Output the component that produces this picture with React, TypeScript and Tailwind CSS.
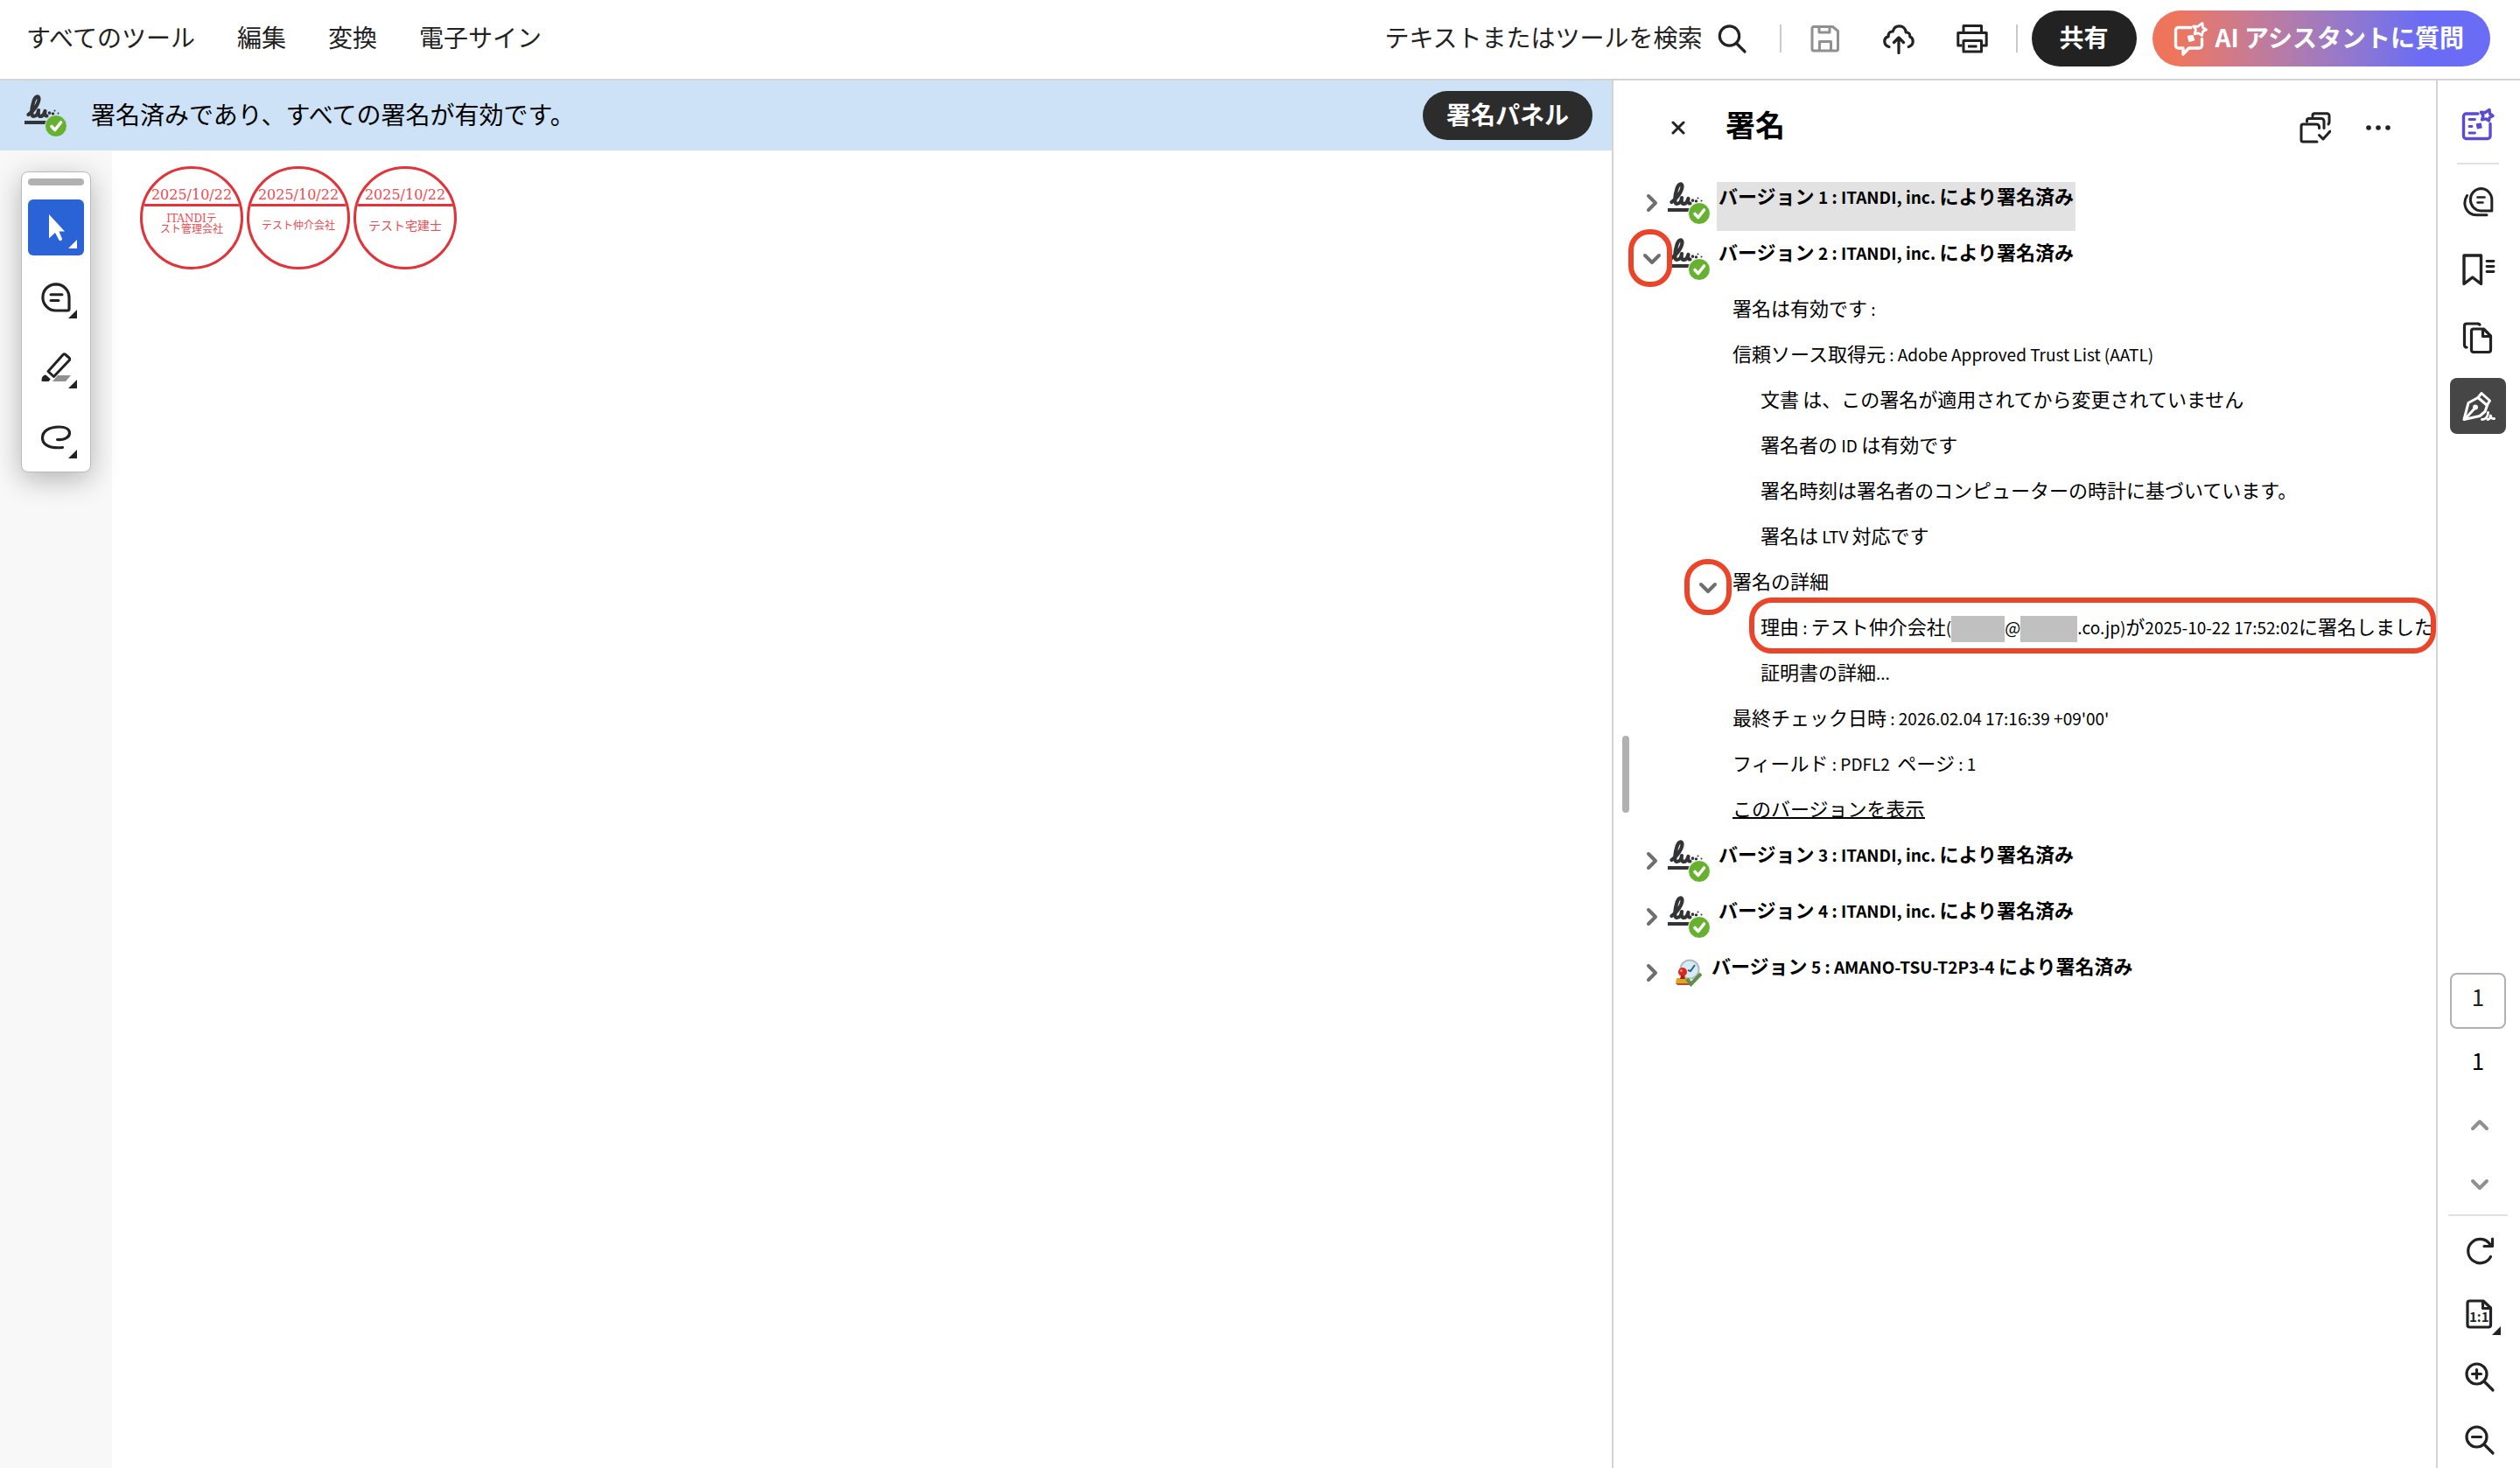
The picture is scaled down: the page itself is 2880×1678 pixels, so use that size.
import React from "react";

type IconProps = { className?: string };

function SearchIcon({ className }: IconProps) {
  return (
    <svg viewBox="0 0 36 36" fill="none" stroke="currentColor" strokeWidth="3.2" strokeLinecap="round" className={className}>
      <circle cx="14.5" cy="15" r="11.2" />
      <path d="M22.5 23.5 32 33" />
    </svg>
  );
}

function SaveIcon() {
  return (
    <svg viewBox="0 0 36 36" fill="none" stroke="currentColor" strokeWidth="3" strokeLinejoin="round" className="size-9">
      <path d="M5 4.5h21.5l6 5V30a2 2 0 0 1-2 2H5a2 2 0 0 1-2-2V6.5a2 2 0 0 1 2-2Z" />
      <path d="M11 5v6h12V5M11.5 32V21.5h13V32" />
    </svg>
  );
}

function CloudUploadIcon() {
  return (
    <svg viewBox="0 0 36 36" fill="none" stroke="currentColor" strokeWidth="3.2" strokeLinecap="round" strokeLinejoin="round" className="size-9">
      <path d="M7 27.5C3.5 26.5 1.8 24 1.8 21.2c0-3 2-5 4.4-5.4-.6-3.5 1.6-6 5-5.800C12.2 6 15 3.8 18.6 3.8c4.4 0 7.4 3 7.6 7.2 3.2-.2 5 2 4.6 5 2.2.8 3.4 2.8 3.4 5.2 0 3-1.8 5.3-5 6.3" />
      <path d="M18 34.5V18M12.5 22.5 18 17l5.5 5.5" />
    </svg>
  );
}

function PrintIcon() {
  return (
    <svg viewBox="0 0 36 36" fill="none" stroke="currentColor" strokeWidth="3" strokeLinejoin="round" className="size-9">
      <path d="M8 11V3.5h20.5V11" />
      <path d="M6.5 26H1.8V11.5h32.4V26h-4.7" />
      <path d="M8 20.5h20.5V33H8ZM13 27h10.5" />
    </svg>
  );
}

function AssistantIcon() {
  return (
    <svg viewBox="0 0 40 40" fill="none" stroke="currentColor" strokeWidth="3.4" strokeLinejoin="round" strokeLinecap="round" className="size-10">
      <path d="M20 7.5H5.5a3 3 0 0 0-3 3v17.5a3 3 0 0 0 3 3h5.5v7l6.5-7h12a3 3 0 0 0 3-3v-7.5" />
      <path d="M33 2.5 33.5 7.500 37.500 10 33.500 12 32.500 16.500l-4-2.700-4.500 1 1.500-4.800-2.800-4.200 5 .5Z" strokeWidth="2.8" />
      <path d="m16.5 17.5 5.5-.8 1.5 5-5.5 1.5Z" fill="currentColor" strokeWidth="1.5" />
    </svg>
  );
}

function GenerateIcon() {
  return (
    <svg viewBox="0 0 40 40" fill="none" stroke="currentColor" strokeWidth="3.4" strokeLinejoin="round" strokeLinecap="round" className="size-10">
      <path d="M20 8H6.5a3 3 0 0 0-3 3v22.5a3 3 0 0 0 3 3H31a3 3 0 0 0 3-3V19.500" />
      <path d="M10 14.5h6.5M10 22.5h3M10 30h6.5" strokeWidth="2.8" />
      <path d="m18.5 20 4.5-.8 1 4.5-4.5 1Z" fill="currentColor" strokeWidth="1.5" />
      <path d="M33 3.5 33.5 8 37 10.5l-3.7 1.700L32.500 16l-3.500-2.200-4.500 1 1.500-4.500-2.500-4 4.500.4Z" strokeWidth="3.4" />
    </svg>
  );
}

function PanelCheckIcon() {
  return (
    <svg viewBox="0 0 36 36" fill="none" stroke="currentColor" strokeWidth="3" strokeLinejoin="round" strokeLinecap="round" className="size-9">
      <path d="M20 34H4a2 2 0 0 1-2-2V16a2 2 0 0 1 2-2h15.5a3 3 0 0 1 3 3v1.5" />
      <path d="M8.5 11v-1.5a2 2 0 0 1 2-2H25a3 3 0 0 1 3 3v8" />
      <path d="M15 5V3.8a2 2 0 0 1 2-2h14.5a2.5 2.5 0 0 1 2.5 2.500V12l-1 2" />
      <path d="m22.5 26.5 4.5 4.5 8-9" />
    </svg>
  );
}

function CommentIcon() {
  return (
    <svg viewBox="0 0 36 36" fill="none" stroke="currentColor" strokeWidth="3.2" strokeLinejoin="round" strokeLinecap="round" className="size-9">
      <path d="M18 2.8a15.2 15.2 0 0 1 15 15.2v13a2 2 0 0 1-2 2H18A15 15 0 0 1 18 2.800Z" />
      <path d="M12 14.8h13M12 21.5h9" strokeWidth="3" />
    </svg>
  );
}

function HighlightIcon() {
  return (
    <svg viewBox="0 0 36 36" fill="none" stroke="currentColor" strokeWidth="3" strokeLinejoin="round" strokeLinecap="round" className="size-9">
      <path d="M20 27h15l-6 7H14Z" fill="#919191" stroke="none" />
      <path d="M26 3.5a2 2 0 0 1 3 0l4 3.500a2 2 0 0 1 0 3L15.500 28.500 9 22.500Z" />
      <path d="M6 27.5 10.5 31.5 9 33H2.500c0-3 1-5 3.500-5.500Z" fill="currentColor" strokeWidth="2" />
    </svg>
  );
}

function DrawIcon() {
  return (
    <svg viewBox="0 0 36 36" fill="none" stroke="currentColor" strokeWidth="3.2" strokeLinecap="round" className="size-9">
      <path d="M19.5 20.5c8 .5 14-2.500 14-7.500 0-4.500-5-7-12-7C10 6 2.500 11 2.500 18.500 2.500 26 10 31 25.500 29.500" />
    </svg>
  );
}

function CommentsIcon() {
  return (
    <svg viewBox="0 0 36 36" fill="none" stroke="currentColor" strokeWidth="3" strokeLinejoin="round" strokeLinecap="round" className="size-9">
      <path d="M21 3.5a12.8 12.8 0 0 1 12.8 12.800V29H21A12.800 12.800 0 0 1 21 3.500Z" />
      <path d="M17.5 13.5h8M17.5 19.5h6" strokeWidth="2.6" />
      <path d="M5.500 11.500C-.5 21 4.500 33.700 16 33.700h12" />
    </svg>
  );
}

function BookmarkIcon() {
  return (
    <svg viewBox="0 0 40 40" fill="none" stroke="currentColor" strokeWidth="3.4" strokeLinejoin="round" strokeLinecap="round" className="size-10">
      <path d="M4 4h19.5v32.5L13.700 29 4 36.500Z" />
      <path d="M30 10.5h8M30 16.5h8M30 22.5h8" strokeWidth="2.8" />
    </svg>
  );
}

function PagesIcon() {
  return (
    <svg viewBox="0 0 36 40" fill="none" stroke="currentColor" strokeWidth="3.2" strokeLinejoin="round" strokeLinecap="round" className="h-10 w-9">
      <path d="M13 10h11.5l8 8v16a2.500 2.500 0 0 1-2.500 2.500H13a2.500 2.500 0 0 1-2.500-2.500V12.500A2.500 2.500 0 0 1 13 10Z" />
      <path d="M23.5 10.5V18.5h8" />
      <path d="M5 31a2.500 2.500 0 0 1-2.500-2.500v-22A2.500 2.500 0 0 1 5 4h13l2 1" />
    </svg>
  );
}

function SignIcon() {
  return (
    <svg viewBox="0 0 40 40" fill="none" stroke="currentColor" strokeWidth="3" strokeLinejoin="round" strokeLinecap="round" className="size-10">
      <path d="M4 35.500 9 16.500 20 10.500l4-5 9.500 8.500-2.500 4-3 8.500L22 31.500Z" />
      <path d="m20 10.500 10 8.500M5 35l11-12" />
      <circle cx="17" cy="21.5" r="1.5" />
      <path d="M24.500 35.500c4 0 7-3 7-8M31 35.500c2 0 3-2 3.500-4.500.3 2.500 1 4 4 3.500" strokeWidth="2.8" />
    </svg>
  );
}

function RotateIcon() {
  return (
    <svg viewBox="0 0 36 36" fill="none" stroke="currentColor" strokeWidth="3.2" strokeLinecap="round" strokeLinejoin="round" className="size-9">
      <path d="M30.5 24.5A13.700 13.700 0 1 1 29.500 10" />
      <path d="M32.5 4v8.5H23" />
    </svg>
  );
}

function ActualSizeIcon() {
  return (
    <svg viewBox="0 0 36 36" fill="none" stroke="currentColor" strokeWidth="3.2" strokeLinejoin="round" className="size-9">
      <path d="M6.5 3H22l8.500 8v19.500a2.500 2.500 0 0 1-2.500 2.500H6.500A2.500 2.500 0 0 1 4 30.500v-25A2.500 2.500 0 0 1 6.500 3Z" />
      <path d="M21.5 3.500V11.500h8.500" />
      <text x="17.3" y="26.5" textAnchor="middle" fontSize="15" fontWeight="700" fill="currentColor" stroke="none">
        1:1
      </text>
    </svg>
  );
}

function ZoomIcon({ plus = false }: { plus?: boolean }) {
  return (
    <svg viewBox="0 0 36 36" fill="none" stroke="currentColor" strokeWidth="3.2" strokeLinecap="round" className="size-9">
      <circle cx="14.5" cy="14.5" r="11.5" />
      <path d="M23.5 23.5 33 33M9.5 14.5h10" />
      {plus && <path d="M14.5 9.5v10" />}
    </svg>
  );
}

function Chevron({ className }: IconProps) {
  return (
    <svg viewBox="0 0 24 24" fill="none" stroke="currentColor" strokeWidth="4" strokeLinecap="round" strokeLinejoin="round" className={className}>
      <path d="m8 4 8 8-8 8" />
    </svg>
  );
}

function SignedIcon({ ring = "#fff" }: { ring?: string }) {
  return (
    <svg viewBox="0 0 48 48" fill="none" strokeLinecap="round" strokeLinejoin="round" className="size-12 shrink-0">
      <g stroke="#333436" strokeWidth="4.2">
        <path d="M4.500 23C10 19.500 16.500 10.500 16.500 5 16.500 1 12.500 1.500 10.500 7.500 8.500 14 6.500 25 10.500 25c3 0 5-3.500 5.500-7-.8 4 0 7 2.500 7s4-3 5-6c-.8 3.500 0 5.500 2 5.500" />
        <path d="M28.500 21v.3M32.500 22v.1" strokeWidth="3.5" />
        <path d="M34.500 18.500v.1M38.500 21.500v.1" strokeWidth="2" />
        <path d="M0 32h26" strokeWidth="4" strokeLinecap="butt" />
      </g>
      <circle cx="36" cy="36" r="12.5" fill="#67b131" stroke={ring} strokeWidth="1" />
      <path d="m31 36.5 3.8 4L41.500 32" stroke="#fff" strokeWidth="3.6" />
    </svg>
  );
}

function TimestampIcon() {
  return (
    <svg viewBox="0 0 32 32" fill="none" className="mt-2 size-8 shrink-0">
      <circle cx="17" cy="12" r="10.5" fill="#d5ecf8" stroke="#b5b9be" strokeWidth="2" />
      <path d="m15 13 3 1 5-7" stroke="#365f7d" strokeWidth="2" />
      <path d="M2 22h14l3 7H1Z" fill="#d9a826" />
      <path d="M2 28h16v2H3Z" fill="#c8442a" />
      <ellipse cx="9" cy="15" rx="5" ry="5" fill="#d9281c" />
      <path d="M7 19h4l1 4H6Z" fill="#b01c14" />
      <circle cx="7.5" cy="13.5" r="1.5" fill="#f58b7d" />
      <path d="M14 23 18.500 29 30 17" stroke="#5f8f4a" strokeWidth="4" />
    </svg>
  );
}

function Corner() {
  return (
    <svg viewBox="0 0 10 10" className="absolute right-2 bottom-2 size-2.5">
      <path d="M10 0v10H0Z" fill="currentColor" />
    </svg>
  );
}

// Latin runs are set a little smaller than the Japanese around them
function Mixed({ text }: { text: string }) {
  return text.split(/([ -~]+)/).map((part, i) =>
    i % 2 ? (
      <span key={i} className="text-[19px] whitespace-pre">
        {part}
      </span>
    ) : (
      part
    )
  );
}

const menuItems = ["すべてのツール", "編集", "変換", "電子サイン"];

const stamps = [
  { lines: ["ITANDIテ", "スト管理会社"], text: "text-[12px] leading-3 pt-2" },
  { lines: ["テスト仲介会社"], text: "text-[12px] leading-4 pt-3.5" },
  { lines: ["テスト宅建士"], text: "text-[14px] leading-4 pt-3.5" },
];

const quickTools = [
  {
    label: "選択",
    active: true,
    icon: (
      <svg viewBox="0 0 36 36" className="size-9" fill="currentColor">
        <path d="M10 3v27.500l7-6.500 4.500 8.500a2 2 0 0 0 3.500-1.500L21.500 22.500H28Z" />
      </svg>
    ),
  },
  { label: "コメント", icon: <CommentIcon /> },
  { label: "ハイライト", icon: <HighlightIcon /> },
  { label: "描画", icon: <DrawIcon /> },
];

const railTools = [
  { label: "コメント", icon: <CommentsIcon /> },
  { label: "しおり", icon: <BookmarkIcon /> },
  { label: "ページ", icon: <PagesIcon /> },
];

function Header() {
  return (
    <header className="flex h-[92px] items-center justify-between border-b-2 border-[#d3d4d2] bg-white pr-[34px] pb-0.5 pl-[30px] text-[28px] leading-9 text-[#222]">
      <nav className="flex gap-12 pb-1">
        {menuItems.map((item) => (
          <button key={item} className="whitespace-nowrap">
            {item}
          </button>
        ))}
      </nav>

      <div className="flex items-center">
        <button className="flex items-center gap-4 whitespace-nowrap">
          <span className="pb-1">テキストまたはツールを検索</span>
          <SearchIcon className="size-9" />
        </button>
        <div className="mr-8 ml-9 h-8 w-0.5 bg-[#cacaca]" />
        <div className="flex gap-12">
          <button aria-label="保存" className="text-[#909090]">
            <SaveIcon />
          </button>
          <button aria-label="アップロード">
            <CloudUploadIcon />
          </button>
          <button aria-label="印刷">
            <PrintIcon />
          </button>
        </div>
        <div className="mr-4 ml-8 h-8 w-0.5 bg-[#cacaca]" />
        <button className="h-16 w-[120px] rounded-full bg-[#222] pb-1 font-bold text-white">共有</button>
        <button className="ml-[18px] flex h-16 items-center gap-2 rounded-full bg-linear-to-r from-[#ee755c] from-7% to-[#6a6cf5] to-80% pr-[30px] pl-6 font-bold whitespace-nowrap text-white">
          <AssistantIcon />
          <span className="pb-1">AI アシスタントに質問</span>
        </button>
      </div>
    </header>
  );
}

function SignatureBanner() {
  return (
    <div className="flex h-20 items-center bg-[#cde2f6] pr-[22px] pl-7">
      <SignedIcon ring="#cde2f6" />
      <p className="ml-7 pb-1 text-[28px] leading-9 text-black">署名済みであり、すべての署名が有効です。</p>
      <button className="ml-auto h-14 rounded-full bg-[#2c2c2c] px-[27px] pb-1 text-[28px] leading-9 font-bold text-white">
        署名パネル
      </button>
    </div>
  );
}

function QuickTools() {
  return (
    <div className="flex w-20 flex-col items-center gap-4 rounded-lg border border-[#b9b9b9] bg-white py-[7px] shadow-[0_8px_32px_rgba(0,0,0,0.28)]">
      <div className="h-2 w-16 rounded-full bg-[#b1b1b1]" />
      {quickTools.map(({ label, icon, active }) => (
        <button
          key={label}
          aria-label={label}
          className={`relative flex size-16 items-center justify-center rounded-md ${
            active ? "bg-[#2a63d6] text-white" : "text-[#222]"
          }`}
        >
          {icon}
          <Corner />
        </button>
      ))}
    </div>
  );
}

function Stamp({ lines, text }: { lines: string[]; text: string }) {
  return (
    <div className="flex size-[118px] flex-col overflow-hidden rounded-full border-3 border-[#e23338] text-center font-['DejaVu_Serif','Noto_Sans_CJK_JP',serif] whitespace-nowrap text-[#f04a50]">
      <div className="flex h-[43px] shrink-0 items-end justify-center border-b-3 border-[#e23338] text-[16px] leading-5">
        2025/10/22
      </div>
      <div className={text}>
        {lines.map((line) => (
          <div key={line}>{line}</div>
        ))}
      </div>
    </div>
  );
}

function VersionRow({
  title,
  open = false,
  selected = false,
  timestamp = false,
}: {
  title: string;
  open?: boolean;
  selected?: boolean;
  timestamp?: boolean;
}) {
  return (
    <div className="flex h-16 items-start">
      <button aria-label={title} aria-expanded={open} className="relative flex h-12 w-9 items-center justify-center text-[#6e6e6e]">
        <Chevron className={open ? "size-6 rotate-90" : "size-6"} />
        {open && (
          <span className="absolute -top-2.5 -left-[9px] h-[66px] w-[50px] rounded-[24px] border-6 border-[#eb4428]" />
        )}
      </button>
      {timestamp ? (
        <div className="mx-2">
          <TimestampIcon />
        </div>
      ) : (
        <SignedIcon />
      )}
      <div
        className={`h-14 px-0.5 text-[22px] leading-[30px] font-bold whitespace-nowrap ${
          timestamp ? "" : "ml-2"
        } ${selected ? "bg-[#e2e2e2]" : ""}`}
      >
        <Mixed text={title} />
      </div>
    </div>
  );
}

function Redacted({ className }: IconProps) {
  return <span className={`inline-block h-[30px] bg-[#c0c0c0] align-middle ${className}`} />;
}

function VersionDetails() {
  return (
    <div className="pl-[110px] text-[22px] leading-[30px] whitespace-nowrap *:h-13">
      <p>
        <Mixed text="署名は有効です :" />
      </p>
      <p>
        <Mixed text="信頼ソース取得元 : Adobe Approved Trust List (AATL)" />
      </p>
      <p className="pl-8">
        <Mixed text="文書 は、この署名が適用されてから変更されていません" />
      </p>
      <p className="pl-8">
        <Mixed text="署名者の ID は有効です" />
      </p>
      <p className="pl-8">署名時刻は署名者のコンピューターの時計に基づいています。</p>
      <p className="pl-8">
        <Mixed text="署名は LTV 対応です" />
      </p>
      <div className="relative">
        <button
          aria-label="署名の詳細"
          aria-expanded
          className="absolute top-0 -left-[46px] flex h-12 w-9 items-center justify-center text-[#6e6e6e]"
        >
          <Chevron className="size-6 rotate-90" />
          <span className="absolute -top-[9px] -left-[9px] h-16 w-[54px] rounded-[26px] border-6 border-[#eb4428]" />
        </button>
        署名の詳細
      </div>
      <div className="relative pl-8">
        <Mixed text="理由 : テスト仲介会社(" />
        <Redacted className="w-[61px]" />
        <Mixed text="@" />
        <Redacted className="w-[65px]" />
        <Mixed text=".co.jp)が2025-10-22 17:52:02に署名しました" />
        <span className="absolute right-0 -top-[17px] left-[19px] h-16 rounded-[26px] border-6 border-[#eb4428]" />
      </div>
      <p className="pl-8">
        <Mixed text="証明書の詳細..." />
      </p>
      <p>
        <Mixed text="最終チェック日時 : 2026.02.04 17:16:39 +09'00'" />
      </p>
      <p>
        <Mixed text="フィールド : PDFL2  ページ : 1" />
      </p>
      <p>
        <a href="#version-2" className="inline-block h-[28px] border-b-2 border-black">
          このバージョンを表示
        </a>
      </p>
    </div>
  );
}

function SignaturePanel() {
  return (
    <aside className="flex w-[942px] shrink-0 border-l-2 border-[#d3d3d3] bg-white pl-2.5 text-black">
      <div className="h-[88px] w-2 shrink-0 self-center rounded-full bg-[#b1b1b1]" />
      <div className="min-w-0 flex-1">
        <div className="flex h-[108px] items-center pr-[42px] pl-6 text-[#222]">
          <button aria-label="閉じる" className="flex size-16 items-center justify-center">
            <svg viewBox="0 0 16 16" fill="none" stroke="currentColor" strokeWidth="3" strokeLinecap="round" className="size-4">
              <path d="m2 2 12 12M14 2 2 14" />
            </svg>
          </button>
          <h2 className="ml-[22px] pb-2 text-[34px] leading-10 font-bold text-black">署名</h2>
          <button aria-label="すべて検証" className="ml-auto flex size-12 items-center justify-center">
            <PanelCheckIcon />
          </button>
          <button aria-label="その他" className="ml-6 flex size-12 items-center justify-center">
            <svg viewBox="0 0 28 8" fill="currentColor" className="h-2 w-7">
              <circle cx="3" cy="4" r="2.8" />
              <circle cx="14" cy="4" r="2.8" />
              <circle cx="25" cy="4" r="2.8" />
            </svg>
          </button>
        </div>

        <div className="pt-2 pl-2">
          <VersionRow title="バージョン 1 : ITANDI, inc. により署名済み" selected />
          <VersionRow title="バージョン 2 : ITANDI, inc. により署名済み" open />
          <VersionDetails />
          <VersionRow title="バージョン 3 : ITANDI, inc. により署名済み" />
          <VersionRow title="バージョン 4 : ITANDI, inc. により署名済み" />
          <VersionRow title="バージョン 5 : AMANO-TSU-T2P3-4 により署名済み" timestamp />
        </div>
      </div>
    </aside>
  );
}

function RightRail() {
  const [page, setPage] = React.useState("1");
  const button = "relative flex size-16 shrink-0 items-center justify-center";

  return (
    <div className="flex w-24 shrink-0 flex-col items-center border-l-2 border-[#d3d3d3] bg-white pt-[18px] pr-0.5 text-[#222]">
      <button aria-label="生成サマリー" className={`${button} text-[#5a4bd0]`}>
        <GenerateIcon />
      </button>
      <div className="mt-3 mb-2.5 h-0.5 w-12 shrink-0 bg-[#e1e1e1]" />
      <div className="flex flex-col gap-3.5">
        {railTools.map(({ label, icon }) => (
          <button key={label} aria-label={label} className={button}>
            {icon}
          </button>
        ))}
        <button aria-label="署名" className={`${button} rounded-lg bg-[#464646] text-white`}>
          <SignIcon />
        </button>
      </div>

      <div className="mt-auto flex flex-col items-center">
        <input
          aria-label="ページ番号"
          value={page}
          onChange={(e) => setPage(e.target.value)}
          className="size-16 rounded-lg border-2 border-[#b1b1b1] pb-3 text-center text-[26px] leading-8"
        />
        <div className="mt-5 text-[26px] leading-8 text-black">1</div>
        <div className="mt-[26px] flex flex-col gap-1 pl-1 text-[#909090]">
          <button aria-label="前のページ" className={button}>
            <Chevron className="size-6 -rotate-90" />
          </button>
          <button aria-label="次のページ" className={button}>
            <Chevron className="size-6 rotate-90" />
          </button>
        </div>
        <div className="mt-0.5 mb-2 h-0.5 w-[68px] bg-[#e1e1e1]" />
        <div className="flex flex-col gap-2 pl-1">
          <button aria-label="回転" className={button}>
            <RotateIcon />
          </button>
          <button aria-label="実際のサイズ" className={button}>
            <ActualSizeIcon />
            <Corner />
          </button>
          <button aria-label="ズームイン" className={button}>
            <ZoomIcon plus />
          </button>
          <button aria-label="ズームアウト" className={button}>
            <ZoomIcon />
          </button>
        </div>
      </div>
    </div>
  );
}

export default function App() {
  return (
    <div className="flex min-h-screen flex-col bg-white font-['Noto_Sans_CJK_JP',sans-serif]">
      <Header />
      <div className="flex flex-1">
        <main className="flex min-w-0 flex-1 flex-col">
          <SignatureBanner />
          <div className="flex flex-1">
            <div className="w-32 shrink-0 bg-[#f8f8f8] pt-6 pl-6">
              <QuickTools />
            </div>
            <div className="flex gap-1 pt-[18px] pl-8">
              {stamps.map((stamp) => (
                <Stamp key={stamp.lines[0]} {...stamp} />
              ))}
            </div>
          </div>
        </main>
        <SignaturePanel />
        <RightRail />
      </div>
    </div>
  );
}
